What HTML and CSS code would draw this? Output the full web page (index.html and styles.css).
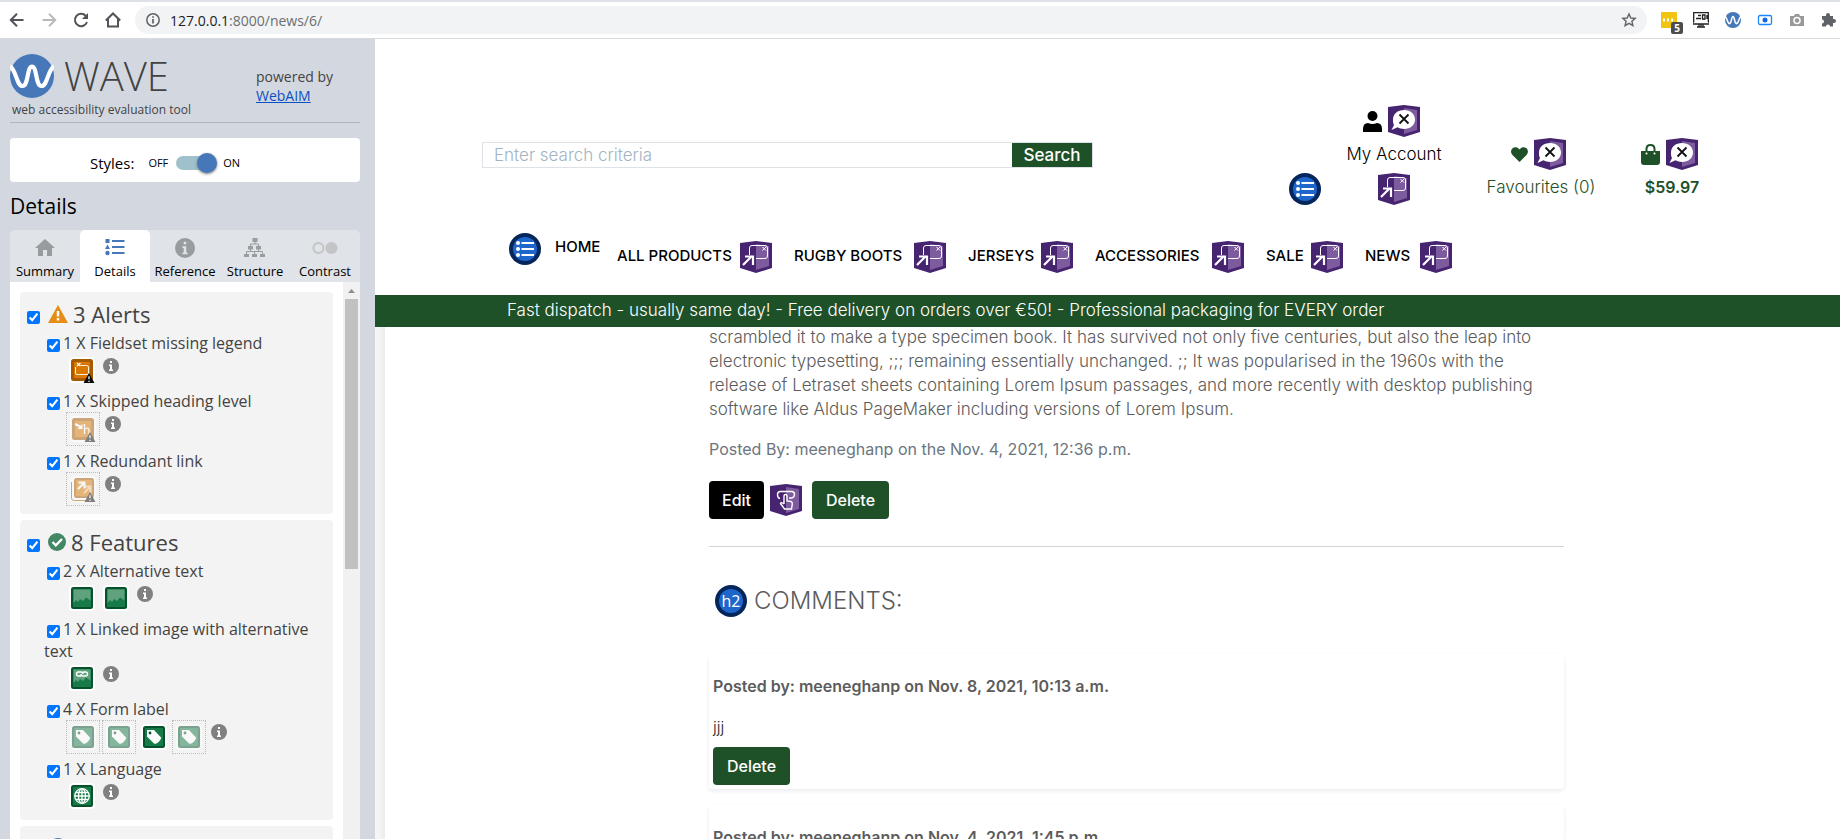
FILE: index.html
```html
<!DOCTYPE html>
<html lang="en">
<head>
<meta charset="utf-8">
<title>News</title>
<link rel="stylesheet" href="styles.css">
</head>
<body>
<svg class="defs" aria-hidden="true">
  <symbol id="cube" viewBox="0 0 32 32"><path d="M0 2 16 0 32 2V27L16 32 0 27Z" fill="#47246f"/><path d="M16 3 29 5V25L16 29Z" fill="#7d5b9e"/></symbol>
  <symbol id="alt" viewBox="0 0 32 32"><use href="#cube"/><path d="M16 5C22.500 5 27 9 27 14.500S22.500 24 16 24C13.500 24 11.500 23.500 9.500 22.300L3.500 25 6 20C5 18.500 5 16.500 5 14.500 5 9 9.500 5 16 5Z" fill="#fff"/><path d="m11.500 9.500 9 9m0-9-9 9" stroke="#111" stroke-width="1.800"/></symbol>
  <symbol id="skip" viewBox="0 0 32 32"><use href="#cube"/><path d="M9.500 14V7q0-2.500 2.500-2.500H25q2.500 0 2.500 2.500V15q0 2.500-2.500 2.500H16" fill="none" stroke="#fff" stroke-width="1"/><path d="m22.500 6 3.500 3.500m0-3.500-3.500 3.500" stroke="#fff" stroke-width="1"/><path d="M3 24 12 15M5 15.500H13V24" fill="none" stroke="#fff" stroke-width="2.200"/></symbol>
  <symbol id="hand" viewBox="0 0 32 32"><use href="#cube"/><path d="M10 14.500Q7.500 14 7.500 10.500 7.500 7.500 10.500 7.500H21.500Q24.500 7.500 24.500 10.500T21.500 14H19M14 20V12q0-1.500 1.500-1.500T17 12V17L21 17.500Q22.500 18 22.300 20L21.500 25H14.500L10.500 19.500Q11 17.500 14 20" fill="none" stroke="#fff" stroke-width="1.400"/></symbol>
  <symbol id="list" viewBox="0 0 32 32"><circle cx="16" cy="16" r="16" fill="#04265a"/><circle cx="16" cy="16" r="12" fill="#1f66cc"/><path d="M12.500 10H25M12.500 16H25M12.500 22H25" stroke="#fff" stroke-width="2.200"/><g fill="#fff"><circle cx="9" cy="10" r="2"/><circle cx="9" cy="16" r="2"/><circle cx="9" cy="22" r="2"/></g></symbol>
  <symbol id="info" viewBox="0 0 16 16"><circle cx="8" cy="8" r="8" fill="#808080"/><path d="M7 3H9V5H7ZM6 6.500H9V11.500H10V13H6V11.500H7V8H6Z" fill="#fff"/></symbol>
  <symbol id="warn" viewBox="0 0 12 11"><path d="M6 0 12 11H0Z" fill="#0b0b0b"/><path d="M6 3.500V7M6 8.500V9.800" stroke="#fff" stroke-width="1.400"/></symbol>
  <symbol id="orange" viewBox="0 0 26 26"><rect width="26" height="26" rx="4" fill="#fff"/><rect x="2" y="2" width="22" height="22" rx="2.500" fill="#a65b00"/><rect x="5" y="5" width="16" height="16" fill="#d97700"/></symbol>
  <symbol id="green" viewBox="0 0 26 26"><rect width="26" height="26" rx="4" fill="#fff"/><rect x="2" y="2" width="22" height="22" rx="2.500" fill="#05522d"/><rect x="4" y="4" width="18" height="18" fill="#167b47"/></symbol>
  <symbol id="fieldset" viewBox="0 0 26 26"><use href="#orange"/><path d="M12 8.500H17.500Q19.500 8.500 19.500 10V16Q19.500 17.500 18 17.500H8Q6.500 17.500 6.500 16V10" fill="none" stroke="#fff" stroke-opacity=".9"/><path d="m8 6 3.500 3m0-3-3.500 3" stroke="#fff" stroke-width="1.200"/><use href="#warn" x="14" y="16" width="12" height="10"/></symbol>
  <symbol id="heading" viewBox="0 0 26 26"><use href="#orange"/><path d="M5 8 11 11" fill="none" stroke="#fff" stroke-width="2"/><path d="M12.500 8V13H7.500Z" fill="#fff"/><path d="M14.500 8V18M14.500 13.500Q18.500 10.500 19 14V18" fill="none" stroke="#fff" stroke-width="1.300"/><use href="#warn" x="14" y="16" width="12" height="10"/></symbol>
  <symbol id="redundant" viewBox="0 0 26 26"><rect width="26" height="26" rx="4" fill="#fff"/><path d="M1.500 6V22Q1.500 24.500 4 24.500H20" fill="none" stroke="#a65b00"/><rect x="4" y="2" width="20" height="20" rx="2.500" fill="#a65b00"/><rect x="6" y="4" width="16" height="16" fill="#d97700"/><path d="m14 17 6-6M14.500 10.500H20.500V16.500" fill="none" stroke="#f3c48d" stroke-width="2"/><path d="m8 13 6-6M8.500 6.500H14.500V12.500" fill="none" stroke="#fff" stroke-width="2"/><use href="#warn" x="14" y="16" width="12" height="10"/></symbol>
  <symbol id="image" viewBox="0 0 26 26"><use href="#green"/><path d="M4.500 4.500H21.500V15.500L17 12.500 14 16 11 14 9 17 7 15 4.500 18Z" fill="#60a17e"/></symbol>
  <symbol id="linked" viewBox="0 0 26 26"><use href="#image"/><path d="M12 11H9.500Q7.500 11 7.500 9T9.500 7H12Q14 7 14 9M14 7H16.500Q18.500 7 18.500 9T16.500 11H14Q12 11 12 9" fill="none" stroke="#fff" stroke-width="1.400"/></symbol>
  <symbol id="tag" viewBox="0 0 26 26"><use href="#green"/><path d="M6 6H13L20 13.500Q20.500 15 17 18.500 14.500 20.500 13 19.500L6 12.500Z" fill="#fff"/><circle cx="9" cy="9" r="1.400" fill="#05522d"/></symbol>
  <symbol id="globe" viewBox="0 0 26 26"><use href="#green"/><g fill="none" stroke="#fff" stroke-width="1.300"><circle cx="13" cy="13" r="7.300"/><ellipse cx="13" cy="13" rx="3.500" ry="7.300"/><path d="M13 6V20M6 13H20M7 9.500H19M7 16.500H19"/></g></symbol>
  <symbol id="wave" viewBox="0 0 44 44"><circle cx="22" cy="22" r="22" fill="#4677b8"/><path d="M0 12.500C6 15 6.500 32 12.500 32S17 12.500 22 12.500 25.500 32 31.500 32 38 15 44 12.500" fill="none" stroke="#fff" stroke-width="4.200"/></symbol>
</svg>

<header class="toolbar">
  <button class="tool" aria-label="Back"><svg width="16" height="16" viewBox="0 0 16 16"><path d="M14.500 8H2M8 1.800 1.800 8 8 14.200" fill="none" stroke="#505357" stroke-width="2"/></svg></button>
  <button class="tool" aria-label="Forward"><svg width="16" height="16" viewBox="0 0 16 16"><path d="M1.500 8H14M8 1.800 14.200 8 8 14.200" fill="none" stroke="#b8babd" stroke-width="2"/></svg></button>
  <button class="tool" aria-label="Reload"><svg width="16" height="16" viewBox="0 0 16 16"><path d="M14 10A6.200 6.200 0 1 1 12.700 3.700" fill="none" stroke="#505357" stroke-width="2"/><path d="M15 1V7H9Z" fill="#505357"/></svg></button>
  <button class="tool" aria-label="Home"><svg width="16" height="16" viewBox="0 0 16 16"><path d="M0.800 8.500 8 1.500 15.200 8.500M3 7V14.500H13V7" fill="none" stroke="#505357" stroke-width="2"/></svg></button>
  <div class="address">
    <svg width="14" height="14" viewBox="0 0 14 14"><circle cx="7" cy="7" r="6.200" fill="none" stroke="#5f6368" stroke-width="1.500"/><path d="M7 6V10.500M7 3.200V4.800" stroke="#5f6368" stroke-width="1.700"/></svg>
    <span class="url">127.0.0.1<span class="path">:8000/news/6/</span></span>
    <svg width="16" height="16" viewBox="0 0 16 16"><path d="m8 2 1.800 4 4.400.4-3.300 2.900 1 4.300L8 11.300l-3.900 2.300 1-4.300L1.800 6.400 6.200 6Z" fill="none" stroke="#5f6368" stroke-width="1.400"/></svg>
  </div>
  <div class="extensions">
    <span class="notes"><svg width="16" height="16" viewBox="0 0 16 16"><rect width="16" height="16" rx="1" fill="#f1c40f"/><path d="M2 8H4M6 8H8M10 8H12" stroke="#fff" stroke-width="3"/></svg><b>5</b></span>
    <svg width="16" height="16" viewBox="0 0 16 16"><path d="M.700 10V.700H15.300V10M0 12H16M0 10H1M15 10H16M8 12V15M4 15H12M3 6.500H8M5 3.500H8M9.500 3V7H12V3ZM14 3V7M6 12V15M10 12V15" fill="none" stroke="#222" stroke-width="1.300"/></svg>
    <svg width="16" height="16"><use href="#wave"/></svg>
    <svg width="16" height="16" viewBox="0 0 16 16"><rect x="1.500" y="3.500" width="13" height="9" rx="1.500" fill="none" stroke="#1a86f8" stroke-width="1.300"/><circle cx="8" cy="8" r="2.500" fill="#1667df"/></svg>
    <svg width="16" height="16" viewBox="0 0 16 16"><path d="M1 4H5L6 2H10L11 4H15V14H1Z" fill="#999"/><circle cx="8" cy="8.500" r="3" fill="#999" stroke="#fff" stroke-width="1.500"/></svg>
    <svg width="16" height="16" viewBox="0 0 16 16"><path d="M2 4H5V3A2 2 0 0 1 9 3V4H12V7H13A2 2 0 0 1 13 11H12V14.500H9A2 2 0 0 0 5 14.500H1V11.500A2 2 0 0 0 1 7.500V4Z" fill="#5f6368"/></svg>
  </div>
</header>

<div class="layout">
  <aside class="wave">
    <div class="brand">
      <div class="brand-main">
        <div class="brand-name"><svg width="44" height="44"><use href="#wave"/></svg><span>WAVE</span></div>
        <div class="tagline">web accessibility evaluation tool</div>
      </div>
      <div class="powered">powered by<br><a href="#">WebAIM</a></div>
    </div>
    <div class="styles-box"><span class="styles-label">Styles:</span><span>OFF</span><input type="checkbox" role="switch" class="switch" aria-label="Styles" checked><span>ON</span></div>
    <h1 class="panel-title">Details</h1>
    <nav class="tabs">
      <button class="tab"><svg width="20" height="20" viewBox="0 0 20 20"><path d="M10 1 20 10H17V18H12V12H8V18H3V10H0Z" fill="#989c9f"/></svg>Summary</button>
      <button class="tab active"><svg width="20" height="20" viewBox="0 0 20 20"><path d="M7 3H19.500M7 9H19.500M7 15H19.500" stroke="#4677b8" stroke-width="2"/><path d="M.500 1H4.500V5H.500ZM2.500 6.500 5 11H0Z" fill="#4677b8"/><circle cx="2.500" cy="15" r="2.200" fill="#4677b8"/></svg>Details</button>
      <button class="tab"><svg width="20" height="20" viewBox="0 0 16 16"><circle cx="8" cy="8" r="8" fill="#989c9f"/><path d="M7 3H9V5H7ZM6 6.500H9V11.500H10V13H6V11.500H7V8H6Z" fill="#e0e3e7"/></svg>Reference</button>
      <button class="tab"><svg width="22" height="20" viewBox="0 0 22 20"><path d="M8.500 0H13.500V4H8.500ZM4 8H9V11.500H4ZM12 8H17V11.500H12ZM0 16H5V19H0ZM8 16H13V19H8ZM16 16H21V19H16Z" fill="#999da0"/><path d="M11 4V6M6.500 8V6H14.500V8M2.500 16V13.500H18.500V16M6.500 11V13.500M14.500 11V13.500M10.500 13.500V16" fill="none" stroke="#999da0"/></svg>Structure</button>
      <button class="tab"><svg width="26" height="20" viewBox="0 0 26 20"><circle cx="6.500" cy="10" r="5" fill="none" stroke="#c2c4c6" stroke-width="2"/><circle cx="19.500" cy="10" r="6" fill="#c2c4c6"/></svg>Contrast</button>
    </nav>
    <div class="panel">
      <div class="groups">
        <section class="group">
          <h2 class="group-title"><input type="checkbox" id="g1" checked><svg width="20" height="18" viewBox="0 0 20 18"><path d="M10 0 20 18H0Z" fill="#e68d18"/><path d="M10 6V11.500M10 13V15.500" stroke="#fff" stroke-width="2.400"/></svg><label for="g1">3 Alerts</label></h2>
          <div class="item"><div class="item-name"><input type="checkbox" id="a1" checked><label for="a1">1 X Fieldset missing legend</label></div><div class="icons"><svg class="mark"><use href="#fieldset"/></svg><svg class="info"><use href="#info"/></svg></div></div>
          <div class="item"><div class="item-name"><input type="checkbox" id="a2" checked><label for="a2">1 X Skipped heading level</label></div><div class="icons"><span class="off"><svg><use href="#heading"/></svg></span><svg class="info"><use href="#info"/></svg></div></div>
          <div class="item"><div class="item-name"><input type="checkbox" id="a3" checked><label for="a3">1 X Redundant link</label></div><div class="icons"><span class="off"><svg><use href="#redundant"/></svg></span><svg class="info"><use href="#info"/></svg></div></div>
        </section>
        <section class="group">
          <h2 class="group-title"><input type="checkbox" id="g2" checked><svg width="18" height="18" viewBox="0 0 18 18"><circle cx="9" cy="9" r="9" fill="#438765"/><path d="m4.500 9 3.300 3.300L14 6" fill="none" stroke="#fff" stroke-width="2.400"/></svg><label for="g2">8 Features</label></h2>
          <div class="item"><div class="item-name"><input type="checkbox" id="f1" checked><label for="f1">2 X Alternative text</label></div><div class="icons"><svg class="mark"><use href="#image"/></svg><svg class="mark"><use href="#image"/></svg><svg class="info"><use href="#info"/></svg></div></div>
          <div class="item"><div class="item-name"><input type="checkbox" id="f2" checked><label for="f2">1 X Linked image with alternative text</label></div><div class="icons"><svg class="mark"><use href="#linked"/></svg><svg class="info"><use href="#info"/></svg></div></div>
          <div class="item"><div class="item-name"><input type="checkbox" id="f3" checked><label for="f3">4 X Form label</label></div><div class="icons"><span class="off"><svg><use href="#tag"/></svg></span><span class="off"><svg><use href="#tag"/></svg></span><svg class="mark"><use href="#tag"/></svg><span class="off"><svg><use href="#tag"/></svg></span><svg class="info"><use href="#info"/></svg></div></div>
          <div class="item"><div class="item-name"><input type="checkbox" id="f4" checked><label for="f4">1 X Language</label></div><div class="icons"><svg class="mark"><use href="#globe"/></svg><svg class="info"><use href="#info"/></svg></div></div>
        </section>
        <section class="group next"><svg width="18" height="18" viewBox="0 0 18 18"><circle cx="9" cy="9" r="9" fill="#4677b8"/></svg></section>
      </div>
      <div class="scrollbar"><svg width="7" height="4" viewBox="0 0 7 4"><path d="M3.500 0 7 4H0Z" fill="#8f8f8f"/></svg><div class="thumb"></div></div>
    </div>
  </aside>

  <main class="site">
    <header class="site-header">
      <div class="top-row">
        <form class="search"><input type="text" placeholder="Enter search criteria" aria-label="Search criteria"><button type="button">Search</button></form>
        <div class="actions">
          <svg class="badge list-badge"><use href="#list"/></svg>
          <div class="action account"><a href="#"><span class="pair"><svg width="19" height="21" viewBox="0 0 19 21"><circle cx="9.500" cy="5" r="5" fill="#000"/><path d="M0 21V18Q0 12 5 12 9.500 14 14 12 19 12 19 18V21Z" fill="#000"/></svg><svg class="badge"><use href="#alt"/></svg></span>My Account</a><svg class="badge"><use href="#skip"/></svg></div>
          <div class="action favourites"><a href="#"><span class="pair"><svg width="17" height="15" viewBox="0 0 17 15"><path d="M8.500 15 1.500 8C-3 3 4-3 8.500 2.500 13-3 20 3 15.500 8Z" fill="#1f5128"/></svg><svg class="badge"><use href="#alt"/></svg></span>Favourites (0)</a></div>
          <div class="action bag"><a href="#"><span class="pair"><svg width="19" height="21" viewBox="0 0 19 21"><path d="M0 7H19V18Q19 21 16 21H3Q0 21 0 18Z" fill="#1f5128"/><path d="M5.500 9V5Q5.500 1 9.500 1T13.500 5V9" fill="none" stroke="#1f5128" stroke-width="2"/><circle cx="5.500" cy="9.500" r="1" fill="#fff"/><circle cx="13.500" cy="9.500" r="1" fill="#fff"/></svg><svg class="badge"><use href="#alt"/></svg></span><strong>$59.97</strong></a></div>
        </div>
      </div>
      <nav class="site-nav">
        <svg class="badge"><use href="#list"/></svg>
        <a href="#">HOME</a>
        <span class="entry"><a href="#">ALL PRODUCTS</a><svg class="badge"><use href="#skip"/></svg></span>
        <span class="entry"><a href="#">RUGBY BOOTS</a><svg class="badge"><use href="#skip"/></svg></span>
        <span class="entry"><a href="#">JERSEYS</a><svg class="badge"><use href="#skip"/></svg></span>
        <span class="entry"><a href="#">ACCESSORIES</a><svg class="badge"><use href="#skip"/></svg></span>
        <span class="entry"><a href="#">SALE</a><svg class="badge"><use href="#skip"/></svg></span>
        <span class="entry"><a href="#">NEWS</a><svg class="badge"><use href="#skip"/></svg></span>
      </nav>
      <div class="banner">Fast dispatch - usually same day! - Free delivery on orders over €50! - Professional packaging for EVERY order</div>
    </header>
    <div class="page">
      <article class="article">
        <p class="story">scrambled it to make a type specimen book. It has survived not only five centuries, but also the leap into<br>electronic typesetting, ;;; remaining essentially unchanged. ;; It was popularised in the 1960s with the<br>release of Letraset sheets containing Lorem Ipsum passages, and more recently with desktop publishing<br>software like Aldus PageMaker including versions of Lorem Ipsum.</p>
        <p class="meta">Posted By: meeneghanp on the Nov. 4, 2021, 12:36 p.m.</p>
        <div class="buttons"><button class="btn edit">Edit</button><svg class="badge"><use href="#hand"/></svg><button class="btn">Delete</button></div>
        <hr>
        <h2 class="comments-title"><svg class="badge" viewBox="0 0 32 32"><circle cx="16" cy="16" r="16" fill="#04265a"/><circle cx="16" cy="16" r="12" fill="#1f66cc"/><text x="16" y="22" text-anchor="middle" class="h2-text">h2</text></svg>COMMENTS:</h2>
        <section class="comment"><h3>Posted by: meeneghanp on Nov. 8, 2021, 10:13 a.m.</h3><p>jjj</p><button class="btn">Delete</button></section>
        <section class="comment"><h3>Posted by: meeneghanp on Nov. 4, 2021, 1:45 p.m.</h3></section>
      </article>
    </div>
  </main>
</div>
</body>
</html>
```

FILE: styles.css
```css
* { box-sizing: border-box; }
body { margin: 0; height: 100vh; display: flex; flex-direction: column; overflow: hidden; background: #fff; font-family: "Open Sans", sans-serif; }
button, input { font: inherit; margin: 0; }
button { border: 0; background: none; padding: 0; }
svg { display: block; flex: none; }
h1, h2, h3, p { margin: 0; font-weight: 400; }
.defs { position: absolute; width: 0; height: 0; }

/* Browser toolbar */
.toolbar { flex: none; display: flex; align-items: center; height: 39px; padding: 0 3px 0 9px; border-top: 2px solid #dee1e6; border-bottom: 1px solid #d8d9db; }
.tool { margin-right: 16px; }
.tool:nth-of-type(4) { margin-right: 14px; }
.address { flex: 1; display: flex; align-items: center; gap: 10px; height: 28px; padding: 0 10px 0 11px; border-radius: 14px; background: #f1f3f4; font-size: 14px; color: #202124; }
.url { flex: 1; }
.path { color: #6b6e72; }
.extensions { display: flex; gap: 16px; margin-left: 14px; }
.notes { position: relative; }
.notes b { position: absolute; left: 10px; top: 10px; width: 12px; height: 12px; border-radius: 2px; background: #4d4d4d; color: #fff; font-size: 10px; line-height: 12px; text-align: center; }

.layout { flex: 1; min-height: 0; display: flex; }

/* Evaluation sidebar */
.wave { flex: none; width: 375px; padding: 15px 15px 0 10px; background: #d3d8e0; display: flex; flex-direction: column; overflow: hidden; color: #000; }
.brand { flex: none; display: flex; height: 69px; border-bottom: 1px solid #b0b5bc; color: #434343; }
.brand-main { width: 246px; }
.brand-name { display: flex; align-items: center; gap: 10px; height: 44px; font-size: 40px; line-height: 44px; font-weight: 300; }
.tagline { padding: 4px 0 0 2px; font-size: 12px; line-height: 16px; }
.powered { padding-top: 13px; font-size: 14px; line-height: 19px; }
.powered a { color: #0b4fc4; }
.styles-box { flex: none; display: flex; align-items: center; height: 44px; margin-top: 15px; padding: 5px 0 0 80px; border-radius: 4px; background: #fff; font-size: 11px; }
.styles-label { margin-right: 14px; font-size: 15px; line-height: 20px; }
.switch { appearance: none; position: relative; width: 40px; height: 14px; margin: 0 7px 0 8px; border-radius: 7px; background: #9fc1cb; }
.switch::after { content: ""; position: absolute; right: -1px; top: -3px; width: 20px; height: 20px; border-radius: 50%; background: #4677b8; box-shadow: 0 1px 3px #777; }
.panel-title { flex: none; height: 48px; padding: 10px 0 0; font-size: 21px; line-height: 28px; }
.tabs { flex: none; display: flex; height: 52px; border-radius: 5px 5px 0 0; background: #e0e3e7; }
.tab { flex: 1 1 0; display: flex; flex-direction: column; align-items: center; padding-top: 8px; gap: 4px; font-size: 13px; line-height: 18px; color: #000; }
.tab.active { border-radius: 5px 5px 0 0; background: #fff; }
.panel { flex: 1; min-height: 0; display: flex; background: #fff; }
.groups { flex: 1; padding: 10px 10px 0; overflow: hidden; }
.group { margin-bottom: 6px; padding-bottom: 4px; border-radius: 4px; background: #f3f3f3; color: #434343; }
.group-title { display: flex; align-items: center; height: 40px; padding: 4px 0 0 7px; font-size: 22px; line-height: 30px; }
.group-title input { margin: 6px 8px 0 0; }
.group-title label { margin-left: 5px; }
.item-name { padding: 0 20px 0 24px; font-size: 16px; line-height: 22px; }
.item-name input { width: 13px; height: 13px; margin: 0 3px; vertical-align: -3px; }
.icons { display: flex; align-items: center; min-height: 36px; padding: 0 0 4px 45px; }
.icons svg { width: 26px; height: 26px; }
.icons .mark { margin: 0 4px; }
.off { width: 34px; height: 34px; padding: 3px; margin: 0 1px; border: 1px dotted #bbb; }
.off svg { opacity: .5; }
.icons .info { width: 16px; height: 16px; align-self: flex-start; margin: 4px; }
.next { padding: 12px 0 0 29px; height: 60px; }
.scrollbar { flex: none; width: 17px; padding-top: 7px; background: #f1f1f1; display: flex; flex-direction: column; align-items: center; gap: 6px; }
.thumb { width: 13px; flex: 0 0 49%; background: #c1c1c1; }

/* Shop page */
.site { flex: 1; min-width: 0; display: flex; flex-direction: column; font-family: Inter, sans-serif; font-size: 16px; line-height: 24px; overflow: hidden; }
.site a { color: #000; text-decoration: none; }
.badge { width: 32px; height: 32px; }
.site-header { flex: none; }
.top-row { display: flex; justify-content: space-between; align-items: flex-start; height: 194px; padding: 66px 142px 0 107px; }
.search { display: flex; flex: 0 1 611px; height: 26px; margin-top: 37px; border: 1px solid #dee2e6; }
.search input { flex: 1; min-width: 0; padding: 0 11px; border: 0; font-size: 17px; font-weight: 300; }
.search input::placeholder { color: #a3b4c1; }
.search button { width: 80px; background: #1f5128; color: #fff; font-size: 17px; line-height: 22px; font-weight: 500; }
.actions { display: flex; }
.list-badge { margin-top: 68px; }
.action { display: flex; flex-direction: column; align-items: center; font-size: 17px; font-weight: 300; white-space: nowrap; }
.action a { display: flex; flex-direction: column; align-items: center; }
.pair { display: flex; align-items: center; gap: 6px; margin-bottom: 5px; padding-right: 5px; }
.account { width: 94px; margin-left: 26px; }
.account > .badge { margin-top: 7px; margin-right: 1px; }
.favourites { width: 110px; margin: 33px 50px 0 45px; }
.bag { width: 52px; margin-top: 33px; }
.favourites a, .bag a { color: #1f5128; }
.bag strong { font-size: 16px; font-weight: 600; }
.site-nav { display: grid; grid-template-columns: 46px 62px 177px 174px 127px 171px 99px 87px; height: 62px; padding-left: 134px; font-size: 15px; font-weight: 500; }
.site-nav > a { padding-top: 2px; }
.entry { display: flex; justify-content: space-between; align-items: center; height: 32px; margin-top: 8px; padding-right: 22px; }
.entry a { padding-bottom: 2px; }
.entry:last-child { padding-right: 0; }
.banner { height: 32px; padding: 3px 0 5px 132px; background: #1f5128; color: #fff; font-size: 17px; font-weight: 300; white-space: nowrap; }
.page { flex: 1; min-height: 0; background: linear-gradient(90deg, #f7f7f7, #f2f2f2 6px, #ebebeb 10px, #fff 10px); }
.article { max-width: 855px; margin-left: 334px; color: #5c5c5c; }
.story { margin-top: -2px; white-space: nowrap; font-size: 17px; font-weight: 300; }
.meta { margin-top: 16px; color: #6c757d; }
.buttons { display: flex; align-items: center; margin-top: 20px; }
.buttons .badge { margin: 0 10px 0 6px; }
.btn { height: 38px; padding: 0 13px 1px; border-radius: 4px; background: #1f5128; color: #fff; font-weight: 500; min-width: 77px; }
.edit { background: #000; min-width: 55px; padding: 0 0 1px; }
.article hr { height: 1px; margin: 27px 0 38px; border: 0; background: #d2d3d4; }
.comments-title { display: flex; align-items: center; gap: 7px; height: 32px; margin-left: 6px; font-size: 24px; line-height: 30px; font-weight: 300; }
.h2-text { font: 16px "Open Sans", sans-serif; fill: #fff; }
.comment { height: 135px; margin-bottom: 16px; padding: 20px 4px 0; border-radius: 4px; box-shadow: 0 2px 4px rgba(0,0,0,.08); }
.comments-title + .comment { margin-top: 37px; }
.comment h3 { font-size: 16px; line-height: 24px; font-weight: 600; }
.comment p { margin: 17px 0 8px; color: #212529; font-weight: 300; }
```
